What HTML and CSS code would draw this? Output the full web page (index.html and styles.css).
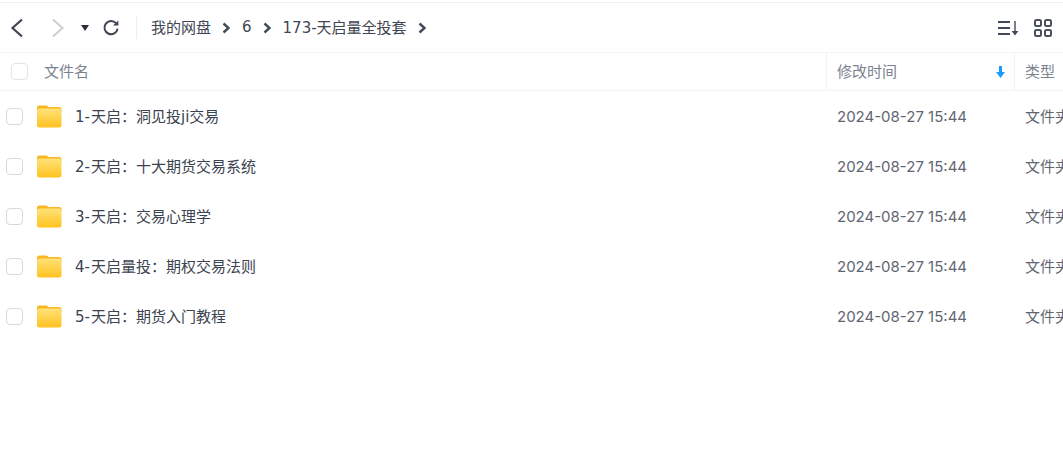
FILE: index.html
```html
<!DOCTYPE html>
<html lang="zh-CN">
<head>
    <meta charset="UTF-8">
    <title>我的网盘</title>
    <link rel="stylesheet" href="styles.css">
</head>
<body>
    <div class="page">
        <div class="toolbar">
            <svg class="nav-icon back" width="16" height="20" viewBox="0 0 16 20"><path d="M13 1.5 L3.5 10 L13 18.5" /></svg>
            <svg class="nav-icon forward" width="16" height="20" viewBox="0 0 16 20"><path d="M3 1.5 L12.5 10 L3 18.5" /></svg>
            <svg class="caret" width="8" height="6" viewBox="0 0 8 6"><path d="M0 0 H8 L4 6 Z" /></svg>
            <svg class="refresh" width="18" height="18" viewBox="0 0 18 18"><path class="refresh-arc" d="M14 4.2 A6.6 6.6 0 1 0 15.6 9.6" /><path class="refresh-head" d="M11 6.6 L16.4 6.6 L16.4 1.4 Z" /></svg>
            <div class="divider"></div>
            <div class="crumbs">
                <span class="crumb">我的网盘</span>
                <svg class="crumb-arrow" width="8" height="12" viewBox="0 0 8 12"><path d="M1.5 1.5 L6.5 6 L1.5 10.5" /></svg>
                <span class="crumb">6</span>
                <svg class="crumb-arrow" width="8" height="12" viewBox="0 0 8 12"><path d="M1.5 1.5 L6.5 6 L1.5 10.5" /></svg>
                <span class="crumb">173-天启量全投套</span>
                <svg class="crumb-arrow" width="8" height="12" viewBox="0 0 8 12"><path d="M1.5 1.5 L6.5 6 L1.5 10.5" /></svg>
            </div>
            <div class="view-tools">
                <svg class="sort-icon" width="21" height="16" viewBox="0 0 21 16"><path d="M0 2 H12 M0 8 H12 M0 14 H12" /><path d="M17 1 V12" /><path class="fill" d="M13.6 11 H20.4 L17 15.5 Z" /></svg>
                <svg class="grid-icon" width="18" height="18" viewBox="0 0 18 18"><rect x="1" y="1" width="6" height="6" rx="1.5" /><rect x="11" y="1" width="6" height="6" rx="1.5" /><rect x="1" y="11" width="6" height="6" rx="1.5" /><rect x="11" y="11" width="6" height="6" rx="1.5" /></svg>
            </div>
        </div>

        <div class="table-head">
            <div class="col-name head-name">
                <span class="check head-check"></span>
                <span class="cjk-label">文件名</span>
            </div>
            <div class="col-time head-time">
                <span class="cjk-label">修改时间</span>
                <svg class="sort-arrow" width="9" height="12" viewBox="0 0 9 12"><path d="M3 0 H6 V6 H9 L4.5 12 L0 6 H3 Z" /></svg>
            </div>
            <div class="col-type head-type"><span class="cjk-label">类型</span></div>
        </div>

        <div class="row">
            <div class="col-name">
                <span class="check"></span>
                <svg class="folder" width="26" height="24" viewBox="0 0 26 24"><use href="#folder-shape" /></svg>
                <span class="file-name cjk-label"><span class="file-index">1-</span>天启：洞见投ji交易</span>
            </div>
            <div class="col-time">2024-08-27 15:44</div>
            <div class="col-type"><span class="cjk-label">文件夹</span></div>
        </div>
        <div class="row">
            <div class="col-name">
                <span class="check"></span>
                <svg class="folder" width="26" height="24" viewBox="0 0 26 24"><use href="#folder-shape" /></svg>
                <span class="file-name cjk-label"><span class="file-index">2-</span>天启：十大期货交易系统</span>
            </div>
            <div class="col-time">2024-08-27 15:44</div>
            <div class="col-type"><span class="cjk-label">文件夹</span></div>
        </div>
        <div class="row">
            <div class="col-name">
                <span class="check"></span>
                <svg class="folder" width="26" height="24" viewBox="0 0 26 24"><use href="#folder-shape" /></svg>
                <span class="file-name cjk-label"><span class="file-index">3-</span>天启：交易心理学</span>
            </div>
            <div class="col-time">2024-08-27 15:44</div>
            <div class="col-type"><span class="cjk-label">文件夹</span></div>
        </div>
        <div class="row">
            <div class="col-name">
                <span class="check"></span>
                <svg class="folder" width="26" height="24" viewBox="0 0 26 24"><use href="#folder-shape" /></svg>
                <span class="file-name cjk-label"><span class="file-index">4-</span>天启量投：期权交易法则</span>
            </div>
            <div class="col-time">2024-08-27 15:44</div>
            <div class="col-type"><span class="cjk-label">文件夹</span></div>
        </div>
        <div class="row">
            <div class="col-name">
                <span class="check"></span>
                <svg class="folder" width="26" height="24" viewBox="0 0 26 24"><use href="#folder-shape" /></svg>
                <span class="file-name cjk-label"><span class="file-index">5-</span>天启：期货入门教程</span>
            </div>
            <div class="col-time">2024-08-27 15:44</div>
            <div class="col-type"><span class="cjk-label">文件夹</span></div>
        </div>
    </div>

    <svg class="defs" width="0" height="0">
        <defs>
            <linearGradient id="folder-fill" x1="0" y1="0" x2="0" y2="1">
                <stop offset="0" stop-color="#ffe27a" />
                <stop offset="1" stop-color="#ffc21f" />
            </linearGradient>
            <symbol id="folder-shape" viewBox="0 0 26 24">
                <path d="M1 4 Q1 1.5 3.5 1.5 H10 Q11.5 1.5 12.5 3 H23 Q25.5 3 25.5 5.5 V8 H1 Z" fill="#f8b622" />
                <rect x="1" y="4.5" width="24.5" height="19" rx="2.5" fill="url(#folder-fill)" />
            </symbol>
        </defs>
    </svg>
</body>
</html>
```

FILE: styles.css
```css
html, body {
    margin: 0;
    padding: 0;
    height: 100%;
    overflow: hidden;
    background: #ffffff;
}

body {
    font-family: Inter, "Noto Sans CJK SC", sans-serif;
    font-size: 15px;
    color: #424e67;
}

.page {
    width: 1063px;
    padding-top: 2px;
}

.defs {
    display: block;
}

.toolbar {
    display: flex;
    align-items: center;
    height: 49px;
    border-top: 1px solid #f0f1f3;
    border-bottom: 1px solid #f3f4f5;
    padding-left: 9px;
    padding-right: 11px;
}

.nav-icon path {
    fill: none;
    stroke-width: 2.2;
}

.back path {
    stroke: #3d4450;
}

.forward {
    margin-left: 25px;
}

.forward path {
    stroke: #cfd1d6;
}

.caret {
    margin-left: 15px;
    fill: #2b2f36;
}

.refresh {
    margin-left: 13px;
}

.refresh-arc {
    fill: none;
    stroke: #3d4450;
    stroke-width: 2;
}

.refresh-head {
    fill: #3d4450;
}

.divider {
    width: 1px;
    height: 23px;
    background: #eceef0;
    margin-left: 16px;
    margin-right: 14px;
}

.crumbs {
    display: flex;
    align-items: center;
    color: #3f4653;
    font-family: "DejaVu Sans", "Noto Sans CJK SC", sans-serif;
}

.crumb {
    margin-bottom: 2px;
}

.crumb-arrow {
    margin: 0 12px 0 11px;
}

.crumb-arrow path {
    fill: none;
    stroke: #424a57;
    stroke-width: 2.4;
}

.view-tools {
    margin-left: auto;
    display: flex;
    align-items: center;
    gap: 15px;
}

.sort-icon path {
    fill: none;
    stroke: #424a57;
    stroke-width: 2;
}

.sort-icon .fill {
    fill: #424a57;
    stroke: none;
}

.sort-icon path:nth-child(2) {
    stroke-width: 1.4;
}

.grid-icon rect {
    fill: none;
    stroke: #4a505c;
    stroke-width: 2;
}

.table-head {
    display: flex;
    height: 37px;
    border-bottom: 1px solid #f3f4f5;
    color: #7c8390;
}

.row {
    display: flex;
    height: 50px;
    color: #5f6672;
}

.col-name {
    width: 826px;
    display: flex;
    align-items: center;
    padding-left: 6px;
    box-sizing: border-box;
}

.col-time {
    width: 188px;
    display: flex;
    align-items: center;
    padding-left: 11px;
    box-sizing: border-box;
}

.col-type {
    flex: 1;
    display: flex;
    align-items: center;
    padding-left: 11px;
    white-space: nowrap;
    overflow: hidden;
}

.cjk-label {
    margin-bottom: 2px;
}

.head-name {
    padding-left: 11px;
}

.head-time {
    border-left: 1px solid #f1f2f4;
    border-right: 1px solid #f1f2f4;
    width: 189px;
    justify-content: space-between;
    padding-left: 10px;
    padding-right: 9px;
}

.head-type {
    padding-left: 10px;
}

.sort-arrow {
    fill: #1a9bff;
}

.check {
    display: block;
    width: 15px;
    height: 15px;
    border: 1px solid #d5dae0;
    border-radius: 4px;
}

.head-check {
    margin-right: 16px;
    border-color: #e2e4e8;
}

.folder {
    margin-left: 13px;
    margin-right: 13px;
}

.file-name {
    color: #3c4350;
    font-family: "DejaVu Sans", "Noto Sans CJK SC", sans-serif;
}

.file-index {
    display: inline-block;
    width: 16px;
}
```
